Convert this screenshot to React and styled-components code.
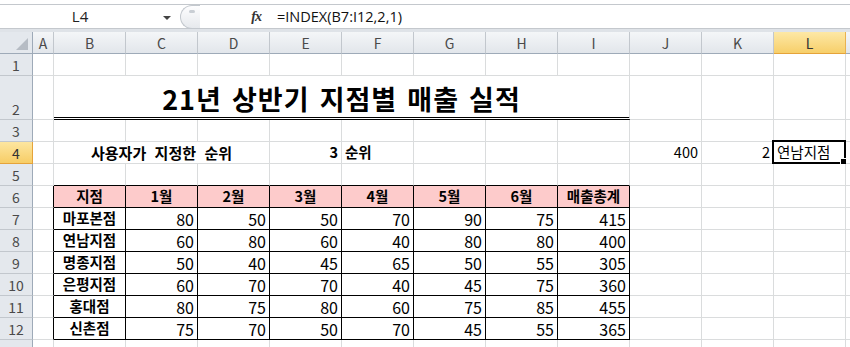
import React from 'react';
import styled, { createGlobalStyle } from 'styled-components';

const Global = createGlobalStyle`
  html, body { margin: 0; padding: 0; background: #fff; }
  body { width: 850px; height: 347px; overflow: hidden; font-family: "Noto Sans CJK KR", "Noto Sans", sans-serif; }
  * { box-sizing: border-box; }
`;

const Window = styled.div`
  width: 850px;
  height: 347px;
  overflow: hidden;
  display: flex;
  flex-direction: column;
  background: #fff;
`;

const FormulaBar = styled.div`
  height: 32px;
  padding-top: 4px;
  display: flex;
  align-items: stretch;
  background: #fff;
  border-bottom: 3px solid #dfe3e8;
`;

const BarInner = styled.div`
  flex: 1;
  display: flex;
  align-items: center;
  border-top: 1px solid #c4c8cd;
  border-bottom: 1px solid #c4c8cd;
`;

const NameBox = styled.div`
  width: 160px;
  text-align: center;
  font-family: "Open Sans", "Noto Sans", sans-serif;
  font-size: 15px;
  color: #222;
  line-height: 1;
`;

const DropArrow = styled.div`
  width: 0;
  height: 0;
  margin: 2px 7px 0 3px;
  border-left: 4px solid transparent;
  border-right: 4px solid transparent;
  border-top: 4px solid #444;
`;

const Splitter = styled.div`
  width: 20px;
  height: 24px;
  margin-left: 2px;
  border: 1px solid #c3c8ce;
  border-right: none;
  border-radius: 12px 0 0 12px;
  background: linear-gradient(#fdfdfe, #e6e9ed);
  position: relative;
  &::after {
    content: '';
    position: absolute;
    left: 8px;
    top: 4px;
    width: 6px;
    height: 3px;
    border-radius: 2px;
    background: #c9ced4;
  }
`;

const FxLabel = styled.div`
  width: 64px;
  text-align: right;
  padding-right: 3px;
  font-family: "Liberation Serif", "DejaVu Serif", serif;
  font-style: italic;
  font-weight: 700;
  font-size: 14px;
  color: #333;
  letter-spacing: -1px;
`;

const FormulaText = styled.div`
  flex: 1;
  height: 100%;
  display: flex;
  align-items: center;
  padding-left: 13px;
  font-family: "Open Sans", "Noto Sans", sans-serif;
  font-size: 14.5px;
  color: #111;
`;

const Sheet = styled.div`
  display: grid;
  grid-template-columns: 33px 21px repeat(12, 72px);
  grid-template-rows: 22px 22px 44px repeat(11, 22px);
`;

const Corner = styled.div`
  background: #e4e8ed;
  border-right: 1px solid #9eaab8;
  border-bottom: 1px solid #9eaab8;
  position: relative;
  &::after {
    content: '';
    position: absolute;
    right: 4px;
    bottom: 3px;
    width: 0;
    height: 0;
    border-left: 12px solid transparent;
    border-bottom: 12px solid #b6bcc4;
  }
`;

const ColHead = styled.div`
  display: flex;
  align-items: center;
  justify-content: center;
  font-size: 14px;
  color: ${p => (p.$sel ? '#333' : '#4a4a4a')};
  background: ${p => (p.$sel ? 'linear-gradient(#fde8a6, #f7cf6a)' : 'linear-gradient(#f4f6f8, #e2e6eb)')};
  border-right: 1px solid ${p => (p.$sel ? '#e9b24f' : '#c2c7cd')};
  border-bottom: 1px solid ${p => (p.$sel ? '#e5a33a' : '#9eaab8')};
  line-height: 1;
`;

const RowHead = styled.div`
  display: flex;
  align-items: flex-end;
  justify-content: center;
  padding-bottom: 3px;
  font-size: 14px;
  color: ${p => (p.$sel ? '#333' : '#4a4a4a')};
  background: ${p => (p.$sel ? 'linear-gradient(#fde6a0, #f7cd66)' : '#e4e8ed')};
  border-right: 1px solid ${p => (p.$sel ? '#e5a33a' : '#9eaab8')};
  border-bottom: 1px solid ${p => (p.$sel ? '#e5a33a' : '#c2c7cd')};
  line-height: 1;
`;

const justify = { left: 'flex-start', center: 'center', right: 'flex-end' };

const Cell = styled.div`
  grid-column: span ${p => p.$span || 1};
  position: relative;
  display: flex;
  align-items: center;
  justify-content: ${p => justify[p.$align || 'left']};
  padding: 0 3px 0 3px;
  border-right: 1px solid ${p => p.$rc || '#dadcdd'};
  border-bottom: ${p => p.$bb || '1px solid #dadcdd'};
  background: ${p => p.$fill || '#fff'};
  font-size: ${p => p.$size || 14.5}px;
  font-weight: ${p => (p.$bold ? 700 : 400)};
  color: #000;
  white-space: nowrap;
  line-height: 1;
  word-spacing: ${p => (p.$ws ? p.$ws : 0)}px;
`;

const Title = styled.span`
  font-size: 27px;
  font-weight: 700;
  letter-spacing: 1px;
  word-spacing: 3px;
  margin-top: 4px;
`;

const SelectBox = styled.div`
  position: absolute;
  top: -2px;
  left: -2px;
  right: -1px;
  bottom: -1px;
  border: 2px solid #000;
  pointer-events: none;
  &::after {
    content: '';
    position: absolute;
    right: -4px;
    bottom: -4px;
    width: 6px;
    height: 6px;
    background: #000;
    border: 1px solid #fff;
  }
`;

const COLS = ['A', 'B', 'C', 'D', 'E', 'F', 'G', 'H', 'I', 'J', 'K', 'L', 'M'];
const TABLE_COLS = ['B', 'C', 'D', 'E', 'F', 'G', 'H', 'I'];

const tableRows = [
  ['마포본점', 80, 50, 50, 70, 90, 75, 415],
  ['연남지점', 60, 80, 60, 40, 80, 80, 400],
  ['명종지점', 50, 40, 45, 65, 50, 55, 305],
  ['은평지점', 60, 70, 70, 40, 45, 75, 360],
  ['홍대점', 80, 75, 80, 60, 75, 85, 455],
  ['신촌점', 75, 70, 50, 70, 45, 55, 365],
];
const headerRow = ['지점', '1월', '2월', '3월', '4월', '5월', '6월', '매출총계'];

function buildData() {
  const d = {};
  d[2] = { B: { title: '21년 상반기 지점별 매출 실적', span: 8, align: 'center', bb: '3px double #000' } };
  d[4] = {
    B: { t: '사용자가 지정한 순위', span: 3, align: 'center', bold: true, ws: 5, size: 15 },
    E: { t: '3', align: 'right', bold: true },
    F: { t: '순위', align: 'left', bold: true },
    J: { t: '400', align: 'right' },
    K: { t: '2', align: 'right' },
    L: { t: '연남지점', align: 'left', selected: true },
  };
  d[6] = {};
  headerRow.forEach((h, i) => {
    d[6][TABLE_COLS[i]] = { t: h, align: 'center', bold: true, fill: '#fdcbcb' };
  });
  tableRows.forEach((r, ri) => {
    const row = {};
    r.forEach((v, i) => {
      row[TABLE_COLS[i]] =
        i === 0 ? { t: v, align: 'center', bold: true } : { t: String(v), align: 'right', size: 16 };
    });
    d[7 + ri] = row;
  });
  return d;
}

const DATA = buildData();

function borderFor(r, c) {
  const inTable = r >= 6 && r <= 12 && TABLE_COLS.includes(c);
  let rc = '#dadcdd';
  let bb = '1px solid #dadcdd';
  if (inTable) {
    rc = '#000';
    bb = '1px solid #000';
  }
  if (c === 'A' && r >= 6 && r <= 12) rc = '#000';
  if (r === 5 && TABLE_COLS.includes(c)) bb = '1px solid #000';
  return { rc, bb };
}

export default function App() {
  const cells = [];
  cells.push(<Corner key="corner" />);
  COLS.forEach(c => cells.push(<ColHead key={'h' + c} $sel={c === 'L'}>{c === 'M' ? '' : c}</ColHead>));
  for (let r = 1; r <= 13; r++) {
    cells.push(<RowHead key={'r' + r} $sel={r === 4}>{r}</RowHead>);
    const row = DATA[r] || {};
    let skip = 0;
    COLS.forEach(c => {
      if (skip > 0) {
        skip--;
        return;
      }
      const info = row[c];
      const { rc, bb } = borderFor(r, c);
      if (info) {
        const span = info.span || 1;
        skip = span - 1;
        cells.push(
          <Cell
            key={c + r}
            $span={span}
            $align={info.align}
            $bold={info.bold}
            $fill={info.fill}
            $size={info.size}
            $ws={info.ws}
            $rc={rc}
            $bb={info.bb || bb}
          >
            {info.title ? <Title>{info.title}</Title> : info.t}
            {info.selected && <SelectBox />}
          </Cell>
        );
      } else {
        cells.push(<Cell key={c + r} $rc={rc} $bb={bb} />);
      }
    });
  }

  return (
    <Window>
      <Global />
      <FormulaBar>
        <BarInner>
          <NameBox>L4</NameBox>
          <DropArrow />
          <Splitter />
          <FxLabel>fx</FxLabel>
          <FormulaText>=INDEX(B7:I12,2,1)</FormulaText>
        </BarInner>
      </FormulaBar>
      <Sheet>{cells}</Sheet>
    </Window>
  );
}
